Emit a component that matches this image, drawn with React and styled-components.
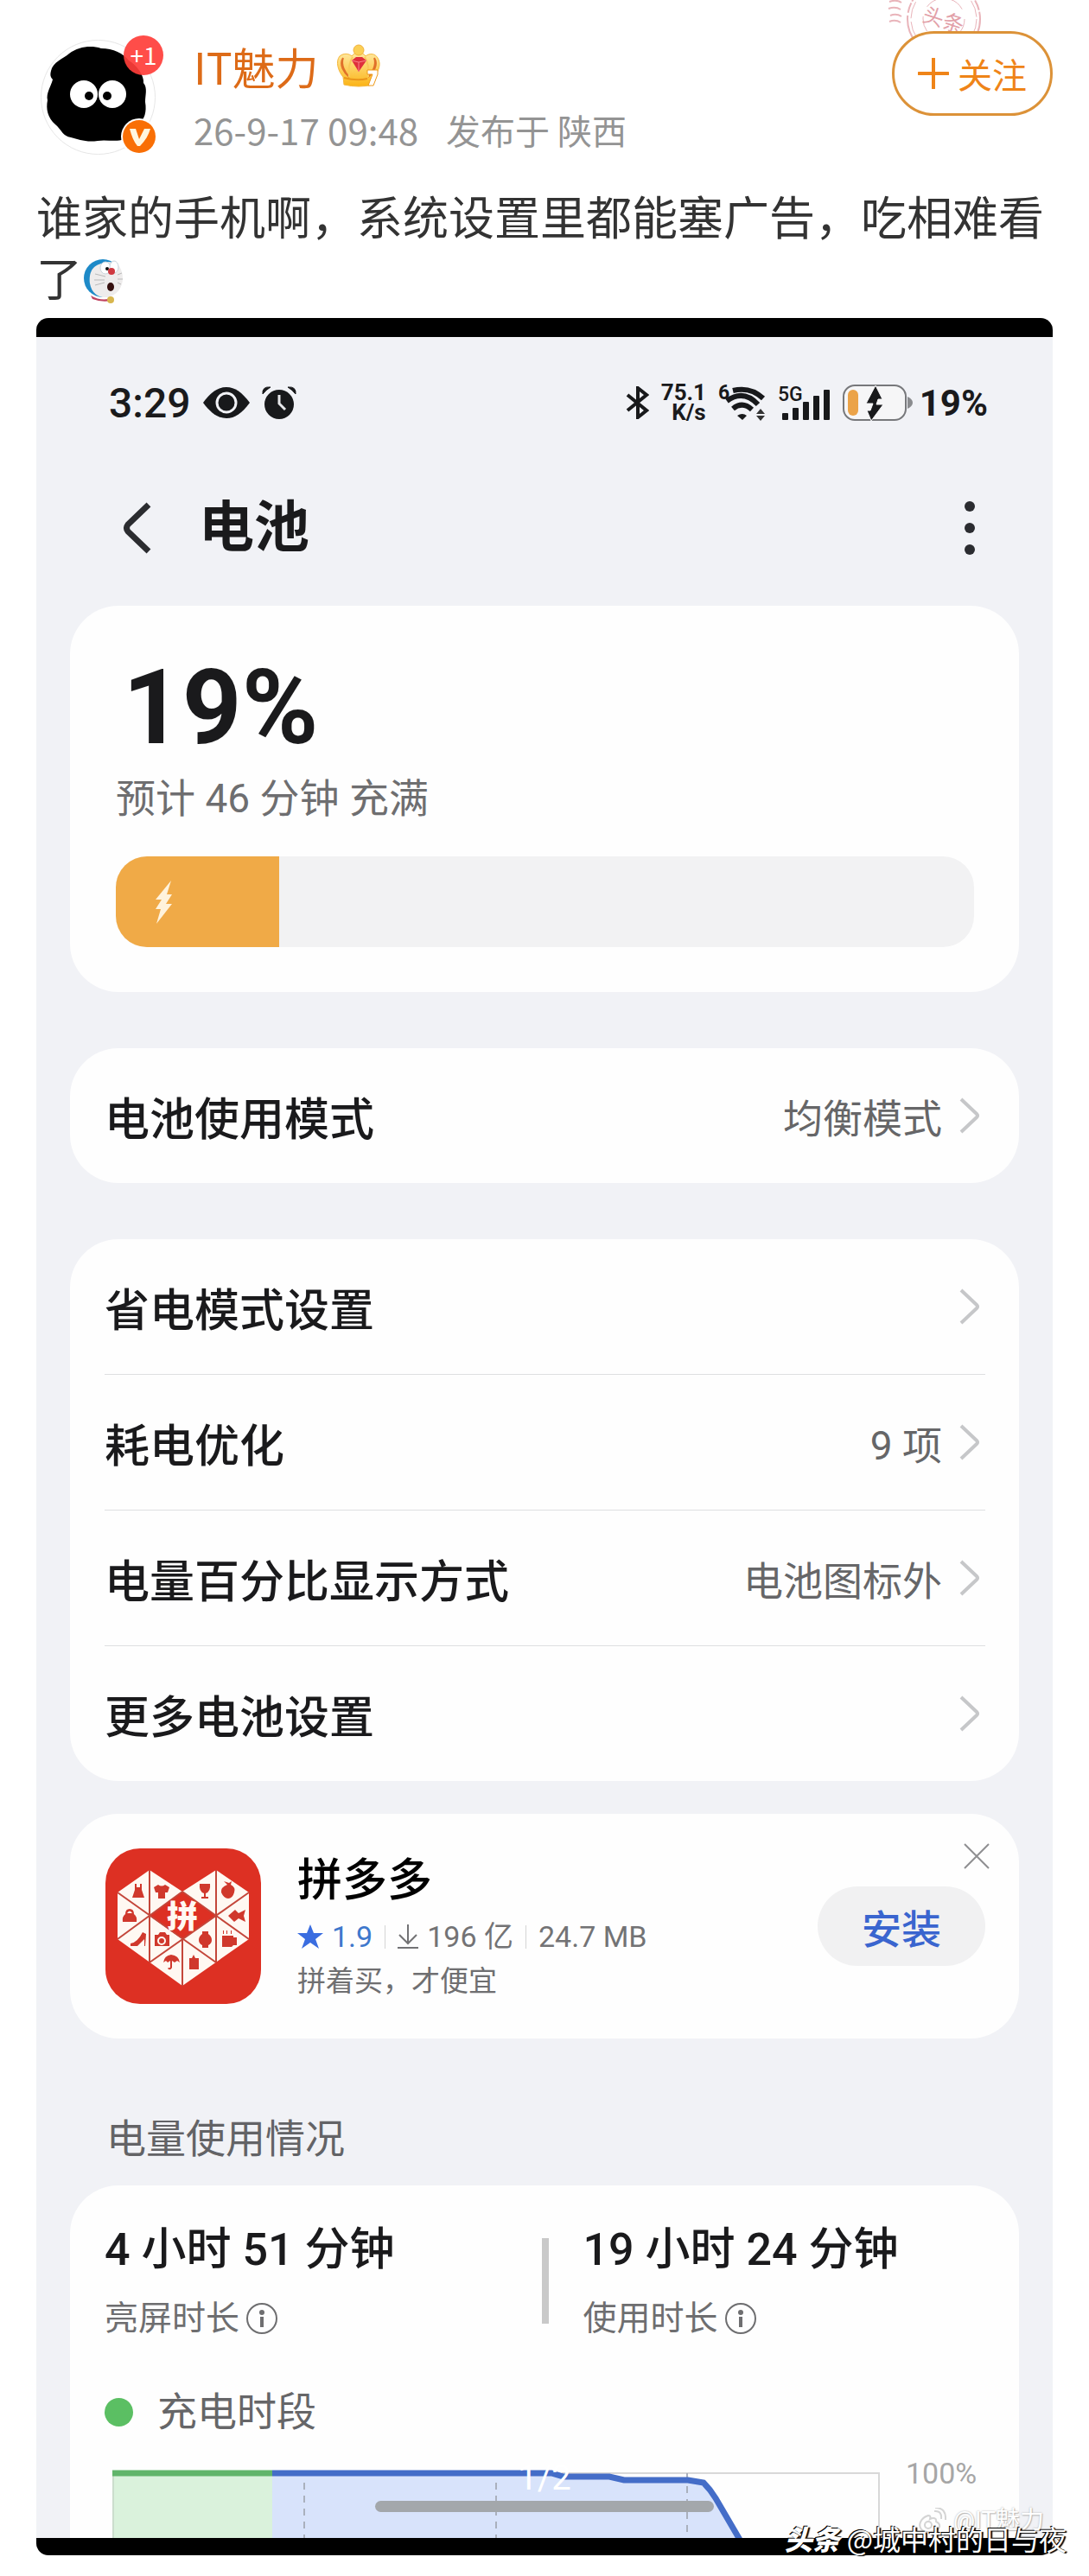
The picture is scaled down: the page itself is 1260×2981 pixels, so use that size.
import React from "react";
import styled, { createGlobalStyle } from "styled-components";

const GlobalStyle = createGlobalStyle`
  * { box-sizing: border-box; }
  body {
    margin: 0;
    background: #fff;
    font-family: Roboto, "Noto Sans CJK SC", sans-serif;
    color: #1a1a1c;
  }
  h1, h2, p, ul, dl, dd { margin: 0; padding: 0; }
  button {
    border: 0;
    padding: 0;
    background: none;
    font-family: inherit;
    color: inherit;
    cursor: pointer;
  }
  svg { display: block; flex: none; }
`;

const Page = styled.main`
  position: relative;
  padding: 36px 42px 24px;
  overflow: hidden;
`;

/* ---------- post header ---------- */

const Header = styled.header`
  position: relative;
  display: flex;
  align-items: flex-start;
  gap: 44px;
  font-family: "Noto Sans CJK SC", sans-serif;
`;

const Avatar = styled.a`
  position: relative;
  margin: 10px 0 0 5px;
`;

const PlusBadge = styled.span`
  position: absolute;
  top: -5px;
  right: -9px;
  width: 46px;
  height: 46px;
  border-radius: 50%;
  background: rgba(255, 62, 58, 0.92);
  color: #fff;
  font-size: 28px;
  line-height: 44px;
  text-align: center;
`;

const VerifiedBadge = styled.span`
  position: absolute;
  right: -2px;
  bottom: 0;
`;

const Author = styled.div`
  flex: 1;
  display: flex;
  flex-direction: column;
  gap: 8px;
  padding-top: 4px;
`;

const NameRow = styled.div`
  display: flex;
  align-items: center;
  gap: 20px;
`;

const Name = styled.a`
  color: #dd6b18;
  font-size: 50px;
  line-height: 72px;
  text-decoration: none;
`;

const Meta = styled.div`
  display: flex;
  gap: 32px;
  color: #949494;
  font-size: 40px;
  line-height: 60px;
`;

const PostTime = styled.time`
  font-size: 42px;
`;

const FollowButton = styled.button`
  position: relative;
  display: flex;
  align-items: center;
  justify-content: center;
  gap: 10px;
  width: 186px;
  height: 98px;
  border: 3px solid #dc9238;
  border-radius: 49px;
  background: #fff;
  color: #ef8418;
  font-size: 40px;
`;

const Stamp = styled.span`
  position: absolute;
  top: -60px;
  right: 82px;
`;

const PostText = styled.p`
  margin-top: 34px;
  color: #333;
  font-family: "Noto Sans CJK SC", sans-serif;
  font-size: 53px;
  line-height: 71px;

  svg {
    display: inline-block;
    vertical-align: -8px;
    margin-left: 2px;
  }
`;

/* ---------- embedded phone screen ---------- */

const Phone = styled.section`
  position: relative;
  margin-top: 12px;
  padding: 22px 0 20px;
  border-radius: 14px;
  background: #000;
  overflow: hidden;
`;

const Screen = styled.div`
  padding: 0 39px;
  background: #f1f2f6;
`;

const StatusBar = styled.div`
  display: flex;
  align-items: center;
  justify-content: space-between;
  height: 152px;
  padding: 0 36px 0 45px;
`;

const StatusGroup = styled.div`
  display: flex;
  align-items: center;
  gap: ${(p) => p.$gap}px;
`;

const Clock = styled.span`
  font-size: 48px;
  font-weight: 500;
`;

const Speed = styled.span`
  width: 52px;
  font-size: 26px;
  font-weight: 700;
  line-height: 23px;
  text-align: right;
`;

const Percent = styled.span`
  font-size: 42px;
  font-weight: 700;
`;

const TitleBar = styled.div`
  display: flex;
  align-items: center;
  gap: 54px;
  height: 138px;
  margin-bottom: 21px;
  padding: 0 50px 0 61px;
`;

const Title = styled.h1`
  flex: 1;
  font-size: 64px;
  font-weight: 700;
  line-height: 84px;
`;

const Card = styled.section`
  position: relative;
  border-radius: ${(p) => (p.$open ? "56px 56px 0 0" : "56px")};
  background: #fefefe;
  padding: ${(p) => p.$pad || "0 39px 0 40px"};
  margin-bottom: ${(p) => p.$after || 0}px;
`;

const Level = styled.div`
  padding-left: 8px;
  font-size: 120px;
  font-weight: 700;
  line-height: 120px;
`;

const Estimate = styled.p`
  margin: 15px 0 37px;
  color: #6e6e70;
  font-size: 46px;
  line-height: 60px;
`;

const Track = styled.div`
  height: 105px;
  border-radius: 36px;
  background: #f2f2f3;
  overflow: hidden;
`;

const Fill = styled.div`
  display: flex;
  align-items: center;
  height: 100%;
  padding-left: 45px;
  background: #f0aa47;
`;

const Rows = styled.ul`
  list-style: none;

  li + li { border-top: 1px solid #dedfe1; }
`;

const Row = styled.button`
  display: flex;
  align-items: center;
  width: 100%;
  height: 156px;
  padding-right: 6px;
  text-align: left;
`;

const RowLabel = styled.span`
  flex: 1;
  font-size: 52px;
  font-weight: 500;
`;

const RowValue = styled.span`
  margin-right: 20px;
  color: #666668;
  font-size: 46px;
`;

const Ad = styled.div`
  display: flex;
  align-items: center;
  gap: 42px;
`;

const AdBody = styled.div`
  flex: 1;
`;

const AdTitle = styled.h2`
  color: #000;
  font-size: 52px;
  font-weight: 500;
  line-height: 72px;
`;

const AdFacts = styled.div`
  display: flex;
  align-items: center;
  gap: 14px;
  color: #737375;
  font-size: 34px;
  line-height: 56px;
`;

const Fact = styled.span`
  display: flex;
  align-items: center;
  gap: 10px;
  color: ${(p) => (p.$blue ? "#3f78cc" : "inherit")};
`;

const FactRule = styled.span`
  width: 1px;
  height: 27px;
  background: #d4d4d4;
`;

const AdNote = styled.p`
  color: #6f6f71;
  font-size: 33px;
  line-height: 48px;
`;

const Install = styled.button`
  width: 194px;
  height: 92px;
  border-radius: 46px;
  background: #f1f1f2;
  color: #3a65cf;
  font-size: 46px;
  font-weight: 500;
`;

const Close = styled.button`
  position: absolute;
  top: 34px;
  right: 34px;
`;

const SectionTitle = styled.h2`
  padding: 86px 40px 24px 42px;
  color: #636366;
  font-size: 46px;
  font-weight: 400;
  line-height: 60px;
`;

const Stats = styled.dl`
  display: grid;
  grid-template-columns: 1fr 8px 1fr;
  align-items: center;
`;

const Stat = styled.div`
  display: flex;
  flex-direction: column-reverse;
  gap: 15px;
  padding-left: ${(p) => p.$indent || 0}px;
`;

const StatName = styled.dt`
  display: flex;
  align-items: center;
  gap: 8px;
  color: #6e6e70;
  font-size: 39px;
  line-height: 56px;
`;

const StatValue = styled.dd`
  font-size: 52px;
  font-weight: 500;
  line-height: 72px;
`;

const StatRule = styled.div`
  height: 99px;
  background: #c9c9c9;
`;

const Legend = styled.div`
  display: flex;
  align-items: center;
  gap: 28px;
  margin: 50px 0 24px;
  color: #666668;
  font-size: 46px;
  line-height: 60px;
`;

const Dot = styled.span`
  width: 33px;
  height: 33px;
  border-radius: 50%;
  background: #5bbf63;
`;

const ChartRow = styled.div`
  display: flex;
  align-items: flex-start;
  gap: 30px;
  padding-left: 9px;
`;

const Plot = styled.svg`
  flex: 1;
  min-width: 0;
  height: 80px;
  margin-top: 12px;
`;

const AxisLabel = styled.span`
  width: 92px;
  color: #a6a6a6;
  font-size: 34px;
  line-height: 34px;
`;

/* ---------- overlays on the picture ---------- */

const Pager = styled.span`
  position: absolute;
  right: 0;
  bottom: 66px;
  left: 0;
  color: #fff;
  font-size: 40px;
  line-height: 46px;
  text-align: center;
  letter-spacing: 0;
`;

const HomeBar = styled.span`
  position: absolute;
  bottom: 50px;
  left: 50%;
  width: 392px;
  height: 13px;
  border-radius: 7px;
  background: #a3a7ab;
  transform: translateX(-50%);
`;

const SourceMark = styled.span`
  position: absolute;
  right: 10px;
  bottom: 22px;
  display: flex;
  align-items: center;
  gap: 8px;
  color: #fff;
  font-size: 28px;
  line-height: 36px;
  text-shadow: 0 0 2px #aaa, 1px 1px 1px #bbb;
`;

const Watermark = styled.div`
  position: absolute;
  right: 26px;
  bottom: 24px;
  display: flex;
  align-items: center;
  gap: 8px;
  color: #fff;
  font-family: "Noto Sans CJK SC", sans-serif;
  font-size: 32px;
  line-height: 40px;
  text-shadow: -1px -1px 0 #000, 2px 1px 1px #000;

  b { font-weight: 900; font-style: italic; }
`;

/* ---------- drawings ---------- */

const AvatarArt = () => (
  <svg width="133" height="133" viewBox="0 0 133 133" role="img" aria-label="IT魅力">
    <circle cx="66.500" cy="66.500" r="66" fill="#fff" stroke="#e6e6e6" />
    <path
      d="M12 36C14 26 26 22 33 16C44 8 58 6 70 10C84 10 96 16 102 24C112 30 120 42 119 50C124 56 121 64 121 72C123 84 120 92 114 97C110 106 100 110 96 115C88 119 76 115 66 117C52 119 44 115 35 113C26 112 24 104 17 98C8 90 6 80 8 70C6 62 12 54 14 46C11 43 11 40 12 36Z"
      fill="#000"
    />
    <circle cx="50" cy="63" r="16" fill="#fff" />
    <circle cx="83" cy="63" r="16" fill="#fff" />
    <circle cx="56" cy="65" r="5" fill="#000" />
    <circle cx="77" cy="65" r="5" fill="#000" />
  </svg>
);

const VerifiedArt = () => (
  <svg width="42" height="42" viewBox="0 0 42 42" aria-hidden="true">
    <circle cx="21" cy="21" r="21" fill="#fff" />
    <circle cx="21" cy="21" r="19" fill="#f96f05" />
    <path d="M10 12h7l4 12 6-12h7c-2 7-6 14-12 20h-3c-4-5-7-12-9-20z" fill="#fff6df" />
  </svg>
);

const Crown = () => (
  <svg width="52" height="50" viewBox="0 0 52 50" aria-hidden="true">
    <defs>
      <linearGradient id="gold" x1="0" y1="0" x2="0" y2="1">
        <stop offset="0" stopColor="#ffe9a0" />
        <stop offset="1" stopColor="#fbb416" />
      </linearGradient>
    </defs>
    <path d="M9 47L8 38C2 31-1 20 4 14C9 10 15 11 18 14C22 8 30 8 34 14C39 10 45 11 48 16C53 24 48 32 44 38L43 47Q26 51 9 47Z" fill="url(#gold)" stroke="#f4b83f" />
    <path d="M8 16C5 24 10 33 15 38C9 33 3 24 8 16M44 16C47 24 42 33 37 38C43 33 49 24 44 16" fill="#d2551b" stroke="#e0702a" strokeWidth="2" />
    <path d="M15 38C14 28 15 21 19 15M37 38C38 28 37 21 33 15" fill="none" stroke="#f8c95a" strokeWidth="2" />
    <circle cx="26" cy="7" r="6" fill="#fbcf55" stroke="#f2b23d" />
    <path d="M18 19l5-4h7l5 4-9 13z" fill="#df2f3c" />
    <path d="M18 19l8 2 9-2M26 21v11" fill="none" stroke="#f9838a" />
    <path d="M9 39Q24 43 36 40" fill="none" stroke="#ea951a" strokeWidth="2" />
    <path d="M36 30h12v5l-5 13h-6l5-13h-6z" fill="#fff" stroke="#ef9a18" strokeWidth="1" />
  </svg>
);

const StampArt = () => (
  <svg width="110" height="100" viewBox="0 0 110 100" fill="none" stroke="#e9b4ba" aria-hidden="true">
    <circle cx="66" cy="46" r="42" strokeWidth="2" strokeDasharray="34 3 12 2" />
    <circle cx="66" cy="46" r="38" strokeWidth="1" strokeDasharray="20 4" />
    <circle cx="66" cy="46" r="24" strokeWidth="1" strokeDasharray="18 12" />
    <path d="M3 26q8-3 14 1M2 34q8-3 14 1M4 42q7-3 13 1M3 49q7-3 13 1" strokeWidth="2" />
    <g transform="rotate(18 66 46)">
      <text x="42" y="56" fill="#e2a0a8" stroke="none" fontSize="24" fontFamily="Noto Sans CJK SC, sans-serif">头条</text>
    </g>
  </svg>
);

const Plus = () => (
  <svg width="36" height="36" viewBox="0 0 36 36" aria-hidden="true">
    <path d="M18 1v34M1 18h34" stroke="#ef8418" strokeWidth="4" strokeLinecap="round" />
  </svg>
);

const CatFace = () => (
  <svg width="46" height="51" viewBox="0 0 46 51" aria-hidden="true">
    <ellipse cx="22" cy="22" rx="22" ry="22" fill="#1e8ac8" />
    <path d="M8 42q14 8 26 2l-2 4q-12 2-22-2z" fill="#c0425f" />
    <path d="M20 5C8 8 6 18 7 28C9 40 18 45 27 44C38 42 45 33 45 22C45 12 40 4 33 4C29 2 24 3 20 5Z" fill="#eeecec" />
    <ellipse cx="25" cy="10" rx="6" ry="7" fill="#fff" stroke="#c9d4dc" />
    <ellipse cx="35" cy="9" rx="5" ry="7" fill="#fff" stroke="#c9d4dc" />
    <circle cx="27" cy="11" r="2" fill="#111" />
    <circle cx="32" cy="14" r="4" fill="#cf3840" />
    <path d="M13 17l12 3M12 24h12M13 30l11-3M39 18l5-2M39 23h6M39 27l4 2" stroke="#b9b9b9" />
    <ellipse cx="31" cy="32" rx="4" ry="5" fill="#35100f" />
    <circle cx="31" cy="47" r="4" fill="#d8b64e" />
  </svg>
);

const Eye = () => (
  <svg width="54" height="36" viewBox="0 0 54 36" aria-hidden="true">
    <path d="M0 18C9 6 17 0 27 0S45 6 54 18C45 30 37 36 27 36S9 30 0 18Z" fill="#18191b" />
    <circle cx="27" cy="18" r="11" fill="#18191b" stroke="#f1f2f6" strokeWidth="3" />
  </svg>
);

const Alarm = () => (
  <svg width="40" height="39" viewBox="0 0 40 39" aria-hidden="true">
    <circle cx="20" cy="21" r="17" fill="#18191b" />
    <path d="M1 9Q0 0 10 1Q5 4 1 9ZM39 9Q40 0 30 1Q35 4 39 9Z" fill="#18191b" stroke="#18191b" />
    <path d="M20 10v10l7 7" fill="none" stroke="#e6e7ea" strokeWidth="3" />
  </svg>
);

const Bluetooth = () => (
  <svg width="27" height="38" viewBox="0 0 27 38" fill="none" stroke="#18191b" strokeWidth="4" aria-hidden="true">
    <path d="M2 10l22 18-10 8V2l10 8L2 28" />
  </svg>
);

const Wifi = () => (
  <svg width="55" height="44" viewBox="0 0 55 44" aria-hidden="true">
    <text x="0" y="18" fontSize="23" fontWeight="700" fill="#18191b" fontFamily="Roboto, sans-serif">6</text>
    <g fill="none" stroke="#18191b" strokeWidth="6">
      <path d="M17 8Q37 3 52 17" />
      <path d="M10 20Q29 6 46 24" />
      <path d="M17 29Q28 20 39 30" />
    </g>
    <path d="M22 37q6-4 11 0l-5 5z" fill="#18191b" />
    <path d="M44 35l5-6 5 6zM44 37l5 6 5-6z" fill="#333" />
  </svg>
);

const Signal = () => (
  <svg width="61" height="44" viewBox="0 0 61 44" fill="#18191b" aria-hidden="true">
    <text x="0" y="20" fontSize="23" fontWeight="500" fontFamily="Roboto, sans-serif">5G</text>
    <rect x="5" y="34" width="7" height="8" rx="1" />
    <rect x="17" y="28" width="7" height="14" rx="1" />
    <rect x="29" y="21" width="7" height="21" rx="1" />
    <rect x="41" y="14" width="7" height="28" rx="1" />
    <rect x="53" y="7" width="7" height="35" rx="1" />
  </svg>
);

const Battery = () => (
  <svg width="81" height="42" viewBox="0 0 81 42" aria-hidden="true">
    <rect x="1" y="1" width="72" height="40" rx="13" fill="#f6f6f7" stroke="#77787b" strokeWidth="2" />
    <rect x="6" y="6" width="12" height="30" rx="6" fill="#eba348" />
    <path d="M75 14q6 3 6 7t-6 7z" fill="#8a8b8e" />
    <path d="M38 1L27 22h8l-3 8h-4l5 12 14-19h-8l2-6h5z" fill="#18191b" stroke="#f6f6f7" strokeWidth="1" />
  </svg>
);

const BackArrow = () => (
  <svg width="34" height="60" viewBox="0 0 34 60" fill="none" stroke="#2b2c30" strokeWidth="7" aria-hidden="true">
    <path d="M30 3L6 26q-3 4 0 8l24 23" />
  </svg>
);

const Dots = () => (
  <svg width="14" height="64" viewBox="0 0 14 64" fill="#2b2c30" aria-hidden="true">
    <circle cx="7" cy="7" r="6" />
    <circle cx="7" cy="32" r="6" />
    <circle cx="7" cy="57" r="6" />
  </svg>
);

const Bolt = () => (
  <svg width="21" height="50" viewBox="0 0 21 50" aria-hidden="true">
    <path d="M19 0L1 22h7L1 33h6L2 50l18-23h-7l7-11h-6z" fill="#fff3dc" />
  </svg>
);

const Chevron = () => (
  <svg width="24" height="42" viewBox="0 0 24 42" fill="none" stroke="#c6c7c9" strokeWidth="4" aria-hidden="true">
    <path d="M2 2l18 17q2 2 0 4L2 40" />
  </svg>
);

const Star = () => (
  <svg width="30" height="28" viewBox="0 0 30 28" aria-hidden="true">
    <path d="M15 0l4 10h11l-9 7 4 11-10-7-10 7 4-11-9-7h11z" fill="#3a6de0" />
  </svg>
);

const Download = () => (
  <svg width="24" height="28" viewBox="0 0 24 28" fill="none" stroke="#737375" strokeWidth="2" aria-hidden="true">
    <path d="M12 0v22M2 12l10 10 10-10M0 27h24" />
  </svg>
);

const Cross = () => (
  <svg width="30" height="30" viewBox="0 0 30 30" stroke="#8f8f91" strokeWidth="2" aria-hidden="true">
    <path d="M1 1l28 28M29 1L1 29" />
  </svg>
);

const Info = () => (
  <svg width="36" height="36" viewBox="0 0 36 36" aria-hidden="true">
    <circle cx="18" cy="18" r="17" fill="none" stroke="#6e6e70" strokeWidth="2" />
    <circle cx="18" cy="11" r="3" fill="#6e6e70" />
    <path d="M18 16v12" stroke="#6e6e70" strokeWidth="4" />
  </svg>
);

const AppIcon = () => (
  <svg width="180" height="180" viewBox="0 0 180 180" role="img" aria-label="拼多多">
    <rect width="180" height="180" rx="40" fill="#dd3023" />
    <path d="M51 25L89 50L128 25L166 51V105L89 159L14 105V51Z" fill="#fff8f2" />
    <path d="M89 50L128 78L89 105L51 78Z" fill="#dd3023" />
    <path
      d="M51 25V132M128 25V132M89 105V159M14 51L128 132M166 51L51 132M14 105L89 50M166 105L89 50"
      stroke="#c4463a"
      strokeWidth="2"
      fill="none"
    />
    <path d="M54 78L89 53L125 78L89 103Z" fill="#dd3023" />
    <text x="71" y="92" fontSize="36" fontWeight="900" fill="#fff8f2" fontFamily="Noto Sans CJK SC, sans-serif">拼</text>
    <g fill="#d0382c">
      <path d="M34 41h2v4h4v-4h2v7l3 9H31l3-9z" />
      <path d="M56 45l5-3q4 3 8 0l5 3-2 6h-3v7H61v-7h-3z" />
      <path d="M109 41h12q1 9-5 11v4h3v2h-8v-2h3v-4q-6-2-5-11z" />
      <path d="M141 42l-4-4 6 2 3-2-1 4q6 3 4 9-2 7-7 7t-8-7q-1-6 7-9z" />
      <path d="M23 76q0-6 5-6t5 6q4 3 3 9H20q-1-6 3-9zm2-1h6q-3-5-6 0z" />
      <path d="M142 78l8-7 4 4 8-4-2 7 2 7-8-4-5 4z" />
      <path d="M43 97l4 2-1 14h-1v-8l-8 8h-8v-3q8-1 14-13z" />
      <path d="M57 100h4l2-3h6l2 3h3v13H57z" />
      <path d="M112 96h7v3q4 3 4 7t-4 6v3h-7v-3q-4-2-4-6t4-7z" />
      <path d="M135 101h13v2h4v9h-4l-2 2h-11zM136 95h1v4h-1zM140 95h1v4h-1zM145 95h1v4h-1z" />
      <path d="M67 132q1-8 9-9 9 1 10 9l-3-2-3 2-3-2v8q-2 4-5 1l1-1q2 1 2-1v-7l-3 2-2-2z" />
      <path d="M97 127h3l2-4 2 4h4v13H97z" />
    </g>
    <circle cx="65" cy="107" r="4" fill="none" stroke="#fff8f2" strokeWidth="2" />
  </svg>
);

const WeiboMark = () => (
  <svg width="34" height="30" viewBox="0 0 34 30" fill="none" stroke="#d4d4d4" strokeWidth="2" aria-hidden="true">
    <path d="M13 9C4 12 1 20 5 25c5 5 18 4 21-3 1-4-3-5-4-6 1-4-3-5-7-3 1-3 0-4-2-4zM20 4q9-1 8 9M21 0q13 0 12 14" />
    <circle cx="13" cy="20" r="4" />
  </svg>
);

const Chart = () => (
  <Plot viewBox="0 0 888 80" preserveAspectRatio="none" role="img" aria-label="充电时段">
    <path d="M520 5H887V80" fill="none" stroke="#d8d8d8" strokeWidth="2" />
    <rect x="0" y="5" width="185" height="75" fill="#daf2dc" />
    <path d="M185 5H510L522 9H575L592 13H666L684 16L728 80H185Z" fill="#d8e3fb" />
    <path d="M222 16V80M444 16V80M665 5V80" stroke="#aab0bd" strokeWidth="2" strokeDasharray="8 7" />
    <path d="M1 5V80" stroke="#bdc9be" strokeWidth="1" />
    <path d="M0 5H185" stroke="#61b56b" strokeWidth="7" />
    <path d="M185 5H508L522 9H575L592 13H666L684 16Q692 24 698 34L726 82" fill="none" stroke="#446dc8" strokeWidth="7" />
  </Plot>
);

/* ---------- page ---------- */

const settings = [
  { label: "省电模式设置" },
  { label: "耗电优化", value: "9 项" },
  { label: "电量百分比显示方式", value: "电池图标外" },
  { label: "更多电池设置" },
];

const SettingRow = ({ label, value }) => (
  <Row type="button">
    <RowLabel>{label}</RowLabel>
    {value && <RowValue>{value}</RowValue>}
    <Chevron />
  </Row>
);

const UsageStat = ({ name, value, indent }) => (
  <Stat $indent={indent}>
    <StatName>
      {name}
      <Info />
    </StatName>
    <StatValue>{value}</StatValue>
  </Stat>
);

export default function App() {
  const level = 19;
  return (
    <>
      <GlobalStyle />
      <Page>
        <Header>
          <Avatar href="#profile">
            <AvatarArt />
            <PlusBadge>+1</PlusBadge>
            <VerifiedBadge>
              <VerifiedArt />
            </VerifiedBadge>
          </Avatar>
          <Author>
            <NameRow>
              <Name href="#profile">IT魅力</Name>
              <Crown />
            </NameRow>
            <Meta>
              <PostTime>26-9-17 09:48</PostTime>
              <span>发布于 陕西</span>
            </Meta>
          </Author>
          <Stamp>
            <StampArt />
          </Stamp>
          <FollowButton type="button">
            <Plus />
            关注
          </FollowButton>
        </Header>

        <PostText>
          谁家的手机啊，系统设置里都能塞广告，吃相难看了
          <CatFace />
        </PostText>

        <Phone>
          <Screen>
            <StatusBar>
              <StatusGroup $gap={14}>
                <Clock>3:29</Clock>
                <Eye />
                <Alarm />
              </StatusGroup>
              <StatusGroup $gap={14}>
                <Bluetooth />
                <Speed>
                  75.1
                  <br />
                  K/s
                </Speed>
                <Wifi />
                <Signal />
                <StatusGroup $gap={8}>
                  <Battery />
                  <Percent>{level}%</Percent>
                </StatusGroup>
              </StatusGroup>
            </StatusBar>

            <TitleBar>
              <button type="button" aria-label="返回">
                <BackArrow />
              </button>
              <Title>电池</Title>
              <button type="button" aria-label="更多">
                <Dots />
              </button>
            </TitleBar>

            <Card $pad="58px 52px 52px 53px" $after={65}>
              <Level>{level}%</Level>
              <Estimate>预计 46 分钟 充满</Estimate>
              <Track>
                <Fill style={{ width: `${level}%` }}>
                  <Bolt />
                </Fill>
              </Track>
            </Card>

            <Card $after={65}>
              <SettingRow label="电池使用模式" value="均衡模式" />
            </Card>

            <Card $after={38}>
              <Rows>
                {settings.map((s) => (
                  <li key={s.label}>
                    <SettingRow {...s} />
                  </li>
                ))}
              </Rows>
            </Card>

            <Card $pad="40px 39px 40px 41px">
              <Ad>
                <AppIcon />
                <AdBody>
                  <AdTitle>拼多多</AdTitle>
                  <AdFacts>
                    <Fact $blue>
                      <Star />
                      1.9
                    </Fact>
                    <FactRule />
                    <Fact>
                      <Download />
                      196 亿
                    </Fact>
                    <FactRule />
                    <Fact>24.7 MB</Fact>
                  </AdFacts>
                  <AdNote>拼着买，才便宜</AdNote>
                </AdBody>
                <Install type="button">安装</Install>
              </Ad>
              <Close type="button" aria-label="关闭">
                <Cross />
              </Close>
            </Card>

            <SectionTitle>电量使用情况</SectionTitle>

            <Card $open $pad="39px 39px 0 40px">
              <Stats>
                <UsageStat name="亮屏时长" value="4 小时 51 分钟" />
                <StatRule />
                <UsageStat name="使用时长" value="19 小时 24 分钟" indent={40} />
              </Stats>
              <Legend>
                <Dot />
                充电时段
              </Legend>
              <ChartRow>
                <Chart />
                <AxisLabel>100%</AxisLabel>
              </ChartRow>
            </Card>
          </Screen>
          <HomeBar />
          <Pager>1/2</Pager>
          <SourceMark>
            <WeiboMark />
            @IT魅力
          </SourceMark>
        </Phone>

        <Watermark>
          <b>头条</b>
          <span>@城中村的日与夜</span>
        </Watermark>
      </Page>
    </>
  );
}
